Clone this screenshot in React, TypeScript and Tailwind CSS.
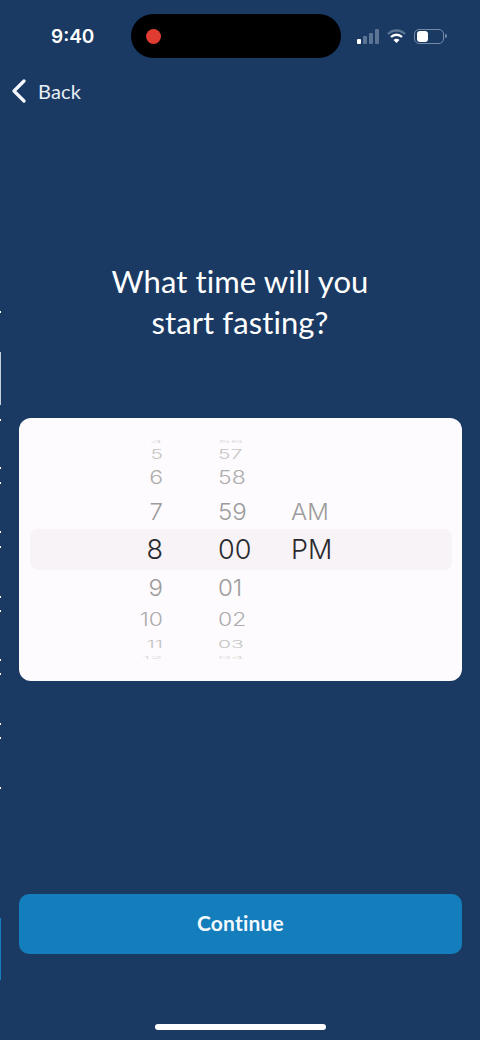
const dots = [311, 419, 467, 482, 531, 546, 596, 610, 659, 673, 723, 737, 787];

function StatusBar() {
  return (
    <div className="flex h-11 items-center pl-[51px] font-['Inter',sans-serif] text-white">
      <span className="w-[80px] text-[19px] leading-none font-semibold">9:40</span>
      <div className="flex h-11 w-[210px] items-center rounded-[22px] bg-black pl-[15px]">
        <span className="h-[15px] w-[15px] rounded-full bg-[#e03c31]" />
      </div>
      <div className="ml-4 flex items-center">
        <svg width="23" height="15" viewBox="0 0 23 15">
          <rect x="0" y="10" width="4" height="5" rx="1" fill="#ffffff" />
          <rect x="6" y="7" width="4" height="8" rx="1" fill="#5d7594" />
          <rect x="12" y="4" width="4" height="11" rx="1" fill="#5d7594" />
          <rect x="18" y="0" width="4" height="15" rx="1" fill="#5d7594" />
        </svg>
        <svg className="ml-[7px]" width="19" height="15" viewBox="0 0 19 15">
          <path d="M1 5 a12 12 0 0 1 17 0" fill="none" stroke="#5d7594" strokeWidth="2.4" />
          <path d="M4 8 a8 8 0 0 1 11 0" fill="none" stroke="#ffffff" strokeWidth="2.4" />
          <path d="M6.5 11 a4 4 0 0 1 6 0 L9.5 14 Z" fill="#ffffff" />
        </svg>
        <div className="ml-2 flex h-[15px] w-[30px] items-center rounded-[5px] border border-[#7489a6] px-[2px]">
          <span className="h-[11px] w-[11px] rounded-[3px] bg-white" />
        </div>
        <span className="ml-px h-1 w-[2px] rounded-r-sm bg-[#7489a6]" />
      </div>
    </div>
  );
}

function WheelRow({ h, size, color, className, children }: { h: string; size: string; color: string; className: string; children?: string }) {
  return (
    <div className={`flex items-center ${h}`}>
      <span className={`block w-full leading-none ${size} ${color} ${className}`}>{children}</span>
    </div>
  );
}

const rowStyles = [
  { h: "h-[9px]", size: "text-[21px]", color: "text-[#d8d8d8]", className: "scale-y-[0.14]" },
  { h: "h-[17px]", size: "text-[21px]", color: "text-[#c4c4c4]", className: "scale-y-[0.65]" },
  { h: "h-[31px]", size: "text-[23px]", color: "text-[#adadad]", className: "scale-y-[0.78]" },
  { h: "h-[35px]", size: "text-[24px]", color: "text-[#9c9c9c]", className: "scale-y-[0.97]" },
  { h: "h-[41px]", size: "text-[27px]", color: "text-[#29292d]", className: "" },
  { h: "h-[35px]", size: "text-[24px]", color: "text-[#9c9c9c]", className: "scale-y-[0.97]" },
  { h: "h-[31px]", size: "text-[23px]", color: "text-[#adadad]", className: "scale-y-[0.78]" },
  { h: "h-[17px]", size: "text-[21px]", color: "text-[#c4c4c4]", className: "scale-y-[0.5]" },
  { h: "h-[9px]", size: "text-[21px]", color: "text-[#d8d8d8]", className: "scale-y-[0.14]" },
];

function Wheel({ items, className }: { items: string[]; className: string }) {
  return (
    <div className={className}>
      {rowStyles.map((row, i) => (
        <WheelRow key={i} {...row}>
          {items[i]}
        </WheelRow>
      ))}
    </div>
  );
}

export default function App() {
  return (
    <div className="relative flex h-[1040px] w-[480px] flex-col overflow-hidden bg-[#1a3a63] pt-[14px] font-['Lato',sans-serif] text-white">
      <StatusBar />

      <div className="mt-5 flex h-[26px] items-center pl-3">
        <svg width="14" height="24" viewBox="0 0 14 24" fill="none" stroke="#f4f7fb" strokeWidth="3.2" strokeLinecap="round" strokeLinejoin="round">
          <path d="M12 2 L2 12 L12 22" />
        </svg>
        <span className="ml-[12px] text-[20px] leading-none tracking-[0.2px] text-[#e8eef5]">Back</span>
      </div>

      <h1 className="mt-[157px] text-center text-[31px] leading-[41px] font-normal tracking-[0.1px]">
        What time will you
        <br />
        start fasting?
      </h1>

      <div className="relative mr-[18px] ml-[19px] mt-[75px] h-[263px] rounded-xl bg-[#fdfbfd] pt-[19px] font-['Inter',sans-serif] font-light">
        <div className="absolute top-[111px] right-[10px] left-[11px] h-[41px] rounded-lg bg-[#f7f3f6]" />
        <div className="relative flex">
          <Wheel
            items={["4", "5", "6", "7", "8", "9", "10", "11", "12"]}
            className="ml-[94px] w-[50px] text-right"
          />
          <Wheel
            items={["56", "57", "58", "59", "00", "01", "02", "03", "04"]}
            className="ml-[55px] w-[50px]"
          />
          <Wheel items={["", "", "", "AM", "PM", "", "", "", ""]} className="ml-[23px] w-[60px]" />
        </div>
      </div>

      <button className="mr-[18px] ml-[19px] mt-[213px] h-[60px] rounded-[10px] bg-[#147dbb] pb-[2px] text-[21px] font-bold tracking-[0.2px] text-[#f2f9fd]">
        Continue
      </button>

      <div className="mx-auto mt-[70px] h-[6px] w-[171px] rounded-full bg-white" />

      <div className="absolute top-[352px] left-0 h-[53px] w-px bg-[#c4d0de]" />
      <div className="absolute top-[918px] left-0 h-[62px] w-px bg-[#147dbb]" />
      {dots.map((top) => (
        <span key={top} className="absolute left-0 h-[2px] w-px bg-white" style={{ top }} />
      ))}
    </div>
  );
}
